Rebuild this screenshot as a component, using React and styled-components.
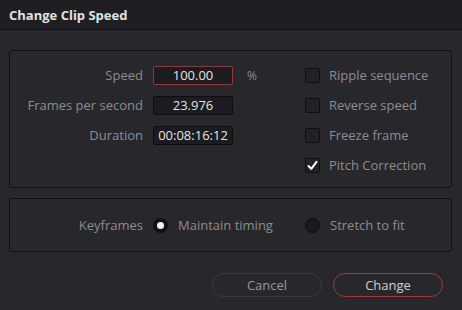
import React from 'react'
import styled, { createGlobalStyle } from 'styled-components'

const GlobalStyle = createGlobalStyle`
  html, body {
    margin: 0;
    padding: 0;
    background: #28272c;
  }
  body {
    font-family: 'Open Sans', 'Noto Sans', sans-serif;
  }
`

const Dialog = styled.div`
  width: 462px;
  height: 310px;
  background: #28272c;
  display: flex;
  flex-direction: column;
  overflow: hidden;
`

const TitleBar = styled.div`
  height: 29px;
  background: #1f1e23;
  border-bottom: 1px solid #121114;
  display: flex;
  align-items: center;
  padding-left: 9px;
  color: #e2e2e4;
  font-size: 13px;
  font-weight: 700;
`

const Body = styled.div`
  padding: 20px 10px 0 9px;
  display: flex;
  flex-direction: column;
  gap: 10px;
`

const Panel = styled.div`
  border: 1px solid #111013;
  border-radius: 3px;
  display: grid;
  grid-template-columns: 133px ${p => p.$cols};
  grid-auto-rows: 30px;
  align-items: center;
  padding: ${p => p.$pad};
`

const Label = styled.div`
  text-align: right;
  color: #8d8c91;
  font-size: 13px;
`

const Input = styled.div`
  margin-left: 10px;
  width: 80px;
  height: 19px;
  box-sizing: border-box;
  background: #1c1b1f;
  border: 1px solid ${p => (p.$active ? '#8c3a3d' : '#0e0e10')};
  border-radius: 2px;
  color: #e4e4e6;
  font-size: 13px;
  display: flex;
  align-items: center;
  justify-content: center;
`

const Unit = styled.div`
  padding-left: 14px;
  color: #8d8c91;
  font-size: 12px;
`

const Option = styled.div`
  display: flex;
  align-items: center;
  gap: ${p => p.$gap || 9}px;
  margin-left: ${p => p.$indent || 0}px;
  color: #8d8c91;
  font-size: 13px;
`

const Box = styled.div`
  width: 15px;
  height: 15px;
  box-sizing: border-box;
  background: #222126;
  border: 1px solid #0f0e11;
  border-radius: 2px;
  display: flex;
  align-items: center;
  justify-content: center;
`

const Radio = styled.div`
  width: 15px;
  height: 15px;
  box-sizing: border-box;
  border-radius: 50%;
  background: ${p => (p.$on ? '#121114' : '#1a191d')};
  border: 1px solid #0f0e11;
  display: flex;
  align-items: center;
  justify-content: center;
  &::after {
    content: '';
    display: ${p => (p.$on ? 'block' : 'none')};
    width: 7px;
    height: 7px;
    border-radius: 50%;
    background: #f4f4f4;
  }
`

const Footer = styled.div`
  display: flex;
  justify-content: flex-end;
  gap: 11px;
  padding: 21px 19px 0 0;
`

const Button = styled.div`
  width: 110px;
  height: 24px;
  box-sizing: border-box;
  border-radius: 12px;
  border: 1px solid ${p => (p.$primary ? '#9b3a3f' : '#3b3a3f')};
  color: ${p => (p.$primary ? '#cfcfd2' : '#9a999e')};
  font-size: 13px;
  display: flex;
  align-items: center;
  justify-content: center;
`

const Check = () => (
  <svg width="11" height="11" viewBox="0 0 11 11">
    <path d="M1.5 6 L4.3 8.8 L9.5 1.8" fill="none" stroke="#fff" strokeWidth="2" strokeLinecap="round" strokeLinejoin="round" />
  </svg>
)

const CheckOption = ({ checked, children }) => (
  <Option>
    <Box>{checked && <Check />}</Box>
    {children}
  </Option>
)

export default function App() {
  return (
    <Dialog>
      <GlobalStyle />
      <TitleBar>Change Clip Speed</TitleBar>
      <Body>
        <Panel $cols="90px 72px 1fr" $pad="9px 0 7px 0">
          <Label>Speed</Label>
          <Input $active>100.00</Input>
          <Unit>%</Unit>
          <CheckOption>Ripple sequence</CheckOption>

          <Label>Frames per second</Label>
          <Input>23.976</Input>
          <div />
          <CheckOption>Reverse speed</CheckOption>

          <Label>Duration</Label>
          <Input>00:08:16:12</Input>
          <div />
          <CheckOption>Freeze frame</CheckOption>

          <div />
          <div />
          <div />
          <CheckOption checked>Pitch Correction</CheckOption>
        </Panel>
        <Panel $cols="162px 1fr" $pad="11px 0 11px 0">
          <Label>Keyframes</Label>
          <Option $gap={10} $indent={10}>
            <Radio $on />
            Maintain timing
          </Option>
          <Option $gap={10}>
            <Radio />
            Stretch to fit
          </Option>
        </Panel>
      </Body>
      <Footer>
        <Button>Cancel</Button>
        <Button $primary>Change</Button>
      </Footer>
    </Dialog>
  )
}
